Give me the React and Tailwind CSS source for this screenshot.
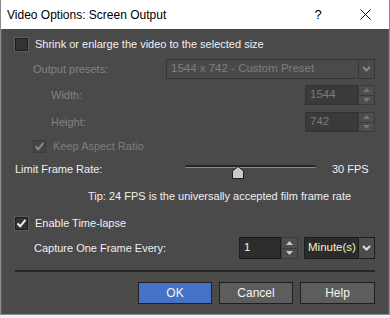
import React from "react";

const font = { fontFamily: '"Liberation Sans", Arial, sans-serif' };

function Check({ checked, disabled }) {
  return (
    <div
      className={
        "w-[13px] h-[13px] shrink-0 border flex items-center justify-center " +
        (disabled ? "border-[#3a3a3a] bg-[#454545]" : "border-[#1c1c1c] bg-[#333333] outline outline-1 outline-[#5e5e5e]")
      }
    >
      {checked && (
        <svg width="11" height="11" viewBox="0 0 11 11">
          <path
            d="M1.5 5.5 L4.2 8.3 L9.5 1.8"
            fill="none"
            stroke={disabled ? "#8a8a8a" : "#f2f2f2"}
            strokeWidth="2"
          />
        </svg>
      )}
    </div>
  );
}

function Chevron({ color = "#e0e0e0" }) {
  return (
    <svg width="9" height="6" viewBox="0 0 9 6">
      <path d="M1 1 L4.5 4.5 L8 1" fill="none" stroke={color} strokeWidth="2" />
    </svg>
  );
}

function Spinner({ value, disabled, inputW }) {
  return (
    <div className="flex h-full">
      <div
        className={
          "h-full border flex items-center pl-[4px] text-[11.5px] " +
          inputW +
          (disabled ? " border-[#333333] bg-[#3a3a3a] text-[#7c7c7c]" : " border-[#1c1c1c] bg-[#2d2d2d] text-[#f0f0f0]")
        }
      >
        {value}
      </div>
      <div className="w-[17px] h-full flex flex-col border border-[#3a3a3a] bg-[#4d4d4d]">
        <div className="flex-1 flex items-center justify-center border-b border-[#3a3a3a]">
          <svg width="7" height="4" viewBox="0 0 7 4">
            <path d="M0 4 L3.5 0 L7 4 Z" fill={disabled ? "#777" : "#c8c8c8"} />
          </svg>
        </div>
        <div className="flex-1 flex items-center justify-center">
          <svg width="7" height="4" viewBox="0 0 7 4">
            <path d="M0 0 L3.5 4 L7 0 Z" fill={disabled ? "#777" : "#c8c8c8"} />
          </svg>
        </div>
      </div>
    </div>
  );
}

export default function App() {
  return (
    <div className="w-[390px] h-[318px] bg-[#f0f0f0] overflow-hidden" style={font}>
      <div className="w-[390px] h-[315px] border-x border-b border-[#8a8a8a] flex flex-col">
        {/* title bar */}
        <div className="h-[29px] bg-white flex items-center pl-[6px] text-[12px] text-[#000]">
          <span className="flex-1">Video Options: Screen Output</span>
          <span className="w-[20px] mr-[13px] text-center text-[13px]">?</span>
          <span className="w-[48px] flex justify-center">
            <svg width="11" height="11" viewBox="0 0 11 11">
              <path d="M0.5 0.5 L10.5 10.5 M10.5 0.5 L0.5 10.5" stroke="#111" strokeWidth="1" />
            </svg>
          </span>
        </div>

        {/* body */}
        <div className="flex-1 bg-[#4a4a4a] border-x border-[#5e5e5e] flex flex-col text-[11px] text-[#f0f0f0] pl-[12px] pr-[12px]">
          <div className="mt-[5px] h-[20px] flex items-center gap-[7px] pl-[1px]">
            <Check />
            <span>Shrink or enlarge the video to the selected size</span>
          </div>

          <div className="mt-[5px] h-[20px] flex items-center text-[#828282]">
            <span className="pl-[19px] flex-1">Output presets:</span>
            <div className="w-[209px] h-full border border-[#363636] bg-[#4a4a4a] flex items-center mr-[1px]">
              <span className="flex-1 pl-[4px] text-[#7e7e7e] text-[11.5px]">1544 x 742 - Custom Preset</span>
              <div className="w-[16px] h-full border-l border-[#363636] flex items-center justify-center">
                <Chevron color="#8a8a8a" />
              </div>
            </div>
          </div>

          <div className="mt-[6px] h-[20px] flex items-center text-[#828282]">
            <span className="pl-[37px] flex-1">Width:</span>
            <div className="h-full mr-[1px]">
              <Spinner value="1544" disabled inputW="w-[53px]" />
            </div>
          </div>

          <div className="mt-[7px] h-[20px] flex items-center text-[#828282]">
            <span className="pl-[37px] flex-1">Height:</span>
            <div className="h-full mr-[1px]">
              <Spinner value="742" disabled inputW="w-[53px]" />
            </div>
          </div>

          <div className="mt-[4px] h-[20px] flex items-center gap-[7px] pl-[19px] text-[#7e7e7e]">
            <Check checked disabled />
            <span>Keep Aspect Ratio</span>
          </div>

          <div className="mt-[3px] h-[20px] flex items-center">
            <span className="w-[171px] pl-[1px]">Limit Frame Rate:</span>
            <div className="relative w-[131px] h-full">
              <div className="absolute left-0 right-0 top-[6px] h-[3px] rounded-[2px] bg-[#262626] border-b border-[#8a8a8a]" />
              <svg className="absolute left-[47px] top-[7px]" width="12" height="13" viewBox="0 0 12 13">
                <path d="M0.5 12.5 L0.5 5 L6 0.5 L11.5 5 L11.5 12.5 Z" fill="#c9c9c9" stroke="#1e1e1e" />
              </svg>
            </div>
            <span className="pl-[16px]">30 FPS</span>
          </div>

          <div className="mt-[7px] h-[20px] flex items-center pl-[74px] whitespace-nowrap">
            Tip: 24 FPS is the universally accepted film frame rate
          </div>

          <div className="mt-[7px] h-[20px] flex items-center gap-[7px] pl-[1px]">
            <Check checked />
            <span>Enable Time-lapse</span>
          </div>

          <div className="mt-[4px] h-[22px] flex items-center">
            <span className="flex-1 pl-[20px]">Capture One Frame Every:</span>
            <div className="h-full">
              <Spinner value="1" inputW="w-[42px]" />
            </div>
            <div className="ml-[6px] w-[71px] h-full border border-[#1c1c1c] bg-[#2b2b2b] flex items-center mr-[1px]">
              <span className="flex-1 pl-[3px] text-[#f8f0c8] whitespace-nowrap text-[11.5px]">Minute(s)</span>
              <div className="w-[16px] shrink-0 h-full bg-[#4d4d4d] border-l border-[#1c1c1c] flex items-center justify-center">
                <Chevron />
              </div>
            </div>
          </div>

          <div className="mt-[11px] h-[2px] bg-[#262626] mr-[1px] ml-[1px]" />

          <div className="mt-[10px] flex justify-end gap-[7px] mr-[1px]">
            <button className="w-[74px] h-[22px] bg-[#4472c4] border border-[#1f1f1f] text-[#f4f4f4] text-[12px]">OK</button>
            <button className="w-[74px] h-[22px] bg-[#5d5d5d] border border-[#1f1f1f] text-[#f4f4f4] text-[12px]">Cancel</button>
            <button className="w-[75px] h-[22px] bg-[#5d5d5d] border border-[#1f1f1f] text-[#f4f4f4] text-[12px]">Help</button>
          </div>
        </div>
      </div>
    </div>
  );
}
